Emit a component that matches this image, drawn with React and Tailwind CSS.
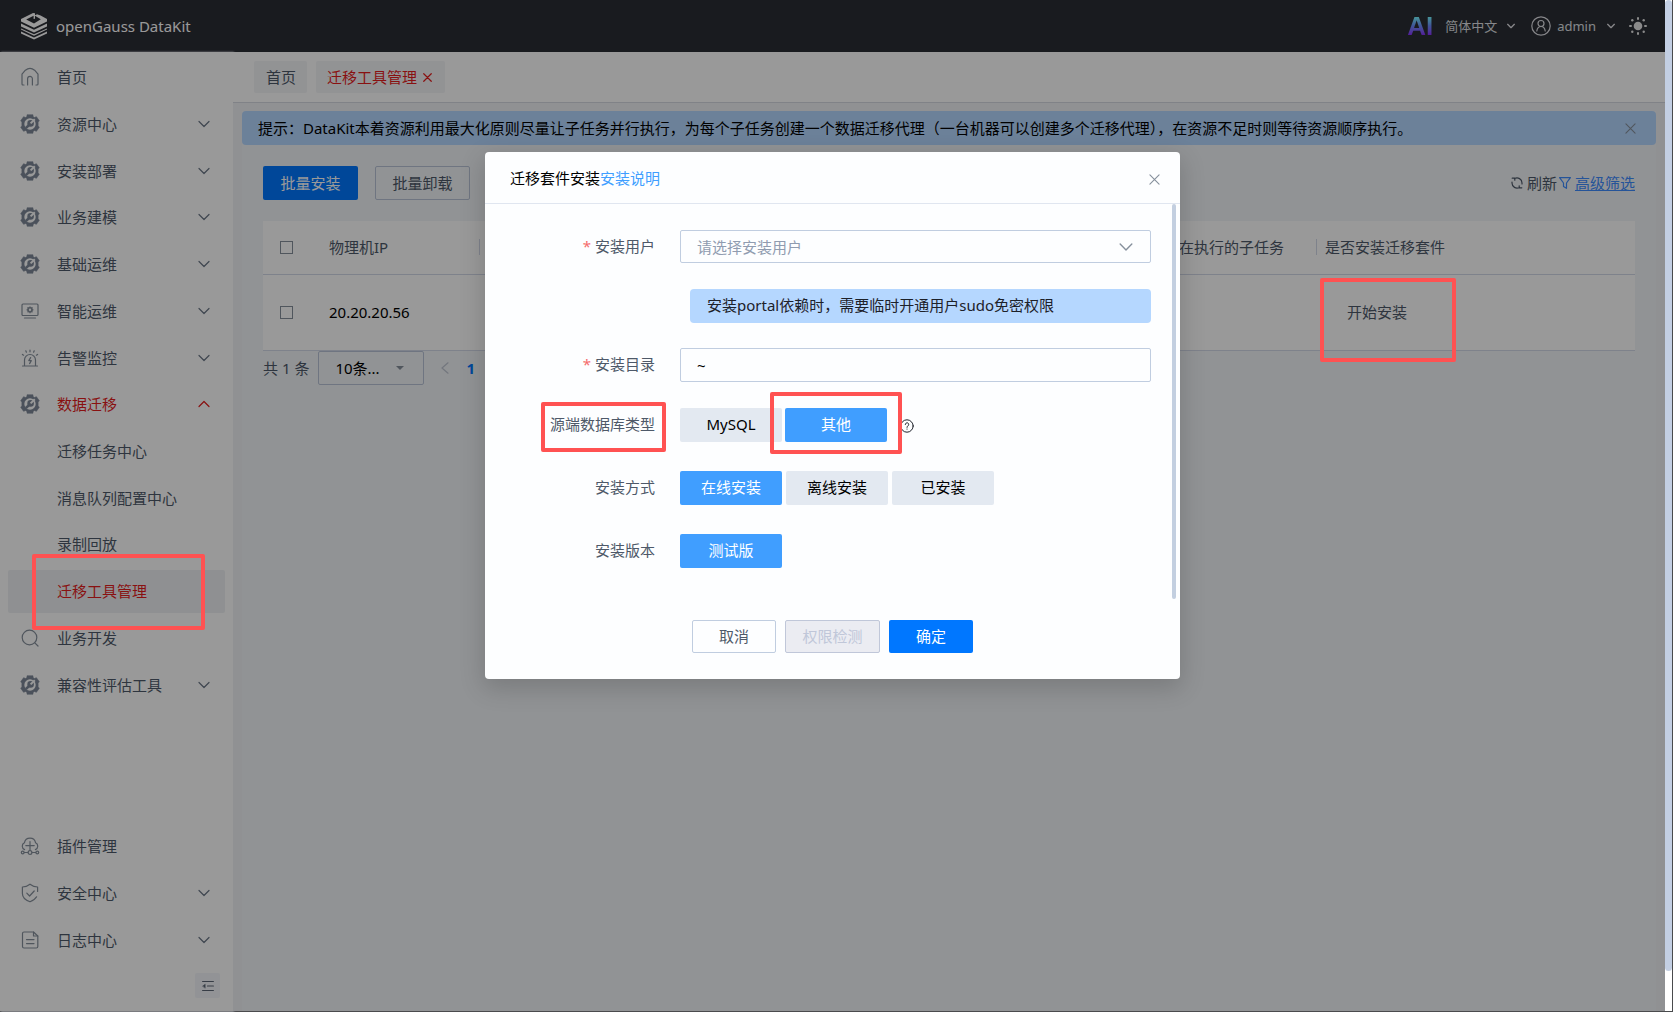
import React from "react";

const base = { fill: "none", stroke: "currentColor", strokeWidth: 1.2, strokeLinecap: "round", strokeLinejoin: "round" };

function Logo() {
  return (
    <svg className="h-7 w-7 text-white" viewBox="0 0 28 28" fill="currentColor" aria-hidden="true">
      <path d="M13 1 L1 7 V9.6 L14 15.8 L27 9.6 V7 L20.6 3.4 L17 2.2 L14.5 3.6 L20.8 7.2 L14 11.4 L6.2 7.6 L13.6 3.8 V7 L15 6.8 V1.2 Z" />
      <path d="M1 11.6 L14 17.8 L27 11.6 V14.4 L14 20.4 L1 14.4 Z" />
      <path d="M1 16.4 L14 22.2 L27 16.4 V17.6 L14 23.8 L1 17.6 Z" />
      <path d="M1 19.4 L14 25.4 L27 19.4 V21.4 L14 27.4 L1 21.4 Z" />
    </svg>
  );
}

function Gear() {
  return (
    <svg className="h-5 w-5" viewBox="0 0 20 20" aria-hidden="true">
      <path
        fill="currentColor"
        stroke="currentColor"
        strokeWidth=".6"
        strokeLinejoin="round"
        d="M7 .8h6v1.800l1.500.9 1.900-.8 2.900 4.100-1.200 1.300v3.800l1.200 1.300-2.900 4.100-1.900-.8-1.500.9v1.800H7v-1.800l-1.500-.9-1.900.8L.7 13.200l1.200-1.300V8.100L.7 6.800l2.900-4.100 1.900.8L7 2.600z"
      />
      <circle cx="10" cy="10" r="5.700" fill="#fff" />
      <path d="M5.800 14.200 9.200 10.800" stroke="currentColor" strokeWidth="2.600" />
      <circle cx="10.600" cy="9.400" r="3.300" fill="currentColor" />
      <path d="M10.600 9.400 14.800 5.200" stroke="#fff" strokeWidth="2" />
    </svg>
  );
}

const icons = {
  gear: <Gear />,
  home: (
    <svg className="h-5 w-5" viewBox="0 0 20 20" {...base} aria-hidden="true">
      <path d="M4 18H3a1 1 0 0 1-1-1V7.2L5.4 3.2Q10 -.4 14.6 3.2L18 7.2V17a1 1 0 0 1-1 1h-1" />
      <path d="M7.600 18v-6.200a2.400 2.400 0 0 1 4.800 0V18" />
    </svg>
  ),
  monitor: (
    <svg className="h-5 w-5" viewBox="0 0 20 20" {...base} aria-hidden="true">
      <rect x="2" y="3" width="16" height="11.500" rx="1" />
      <path d="M4.500 17h11" />
      <circle cx="10" cy="8.800" r="2" strokeWidth="1.600" />
      <path d="M10 5.800v.8M10 11v.8M7 8.800h.8M12.200 8.800h.8M7.900 6.700l.5.5M11.600 10.400l.5.5M12.100 6.700l-.5.5M8.400 10.400l-.5.5" />
    </svg>
  ),
  alarm: (
    <svg className="h-5 w-5" viewBox="0 0 20 20" {...base} aria-hidden="true">
      <path d="M2.500 18h15M4.500 18v-6a5.500 5.500 0 0 1 11 0v6" />
      <path d="M10.600 9.600 8.800 12.600h2.500L9.600 15.600" />
      <path d="M10 2v1.800M5.800 2.800l.6 1.400M14.200 2.800l-.6 1.400M2.400 6.400l1.200.8M17.600 6.400l-1.200.8" />
    </svg>
  ),
  search: (
    <svg className="h-5 w-5" viewBox="0 0 20 20" {...base} aria-hidden="true">
      <circle cx="9.500" cy="9.500" r="7.300" />
      <path d="M14.800 14.800 18 18" />
    </svg>
  ),
  cloud: (
    <svg className="h-5 w-5" viewBox="0 0 20 20" {...base} aria-hidden="true">
      <path d="M4.600 13.600A3.700 3.700 0 0 1 4.400 6.800 5.700 5.700 0 0 1 15.600 6.800 3.700 3.700 0 0 1 15.400 13.600" />
      <path d="M10 5.500v8.500M5.800 9.600h8.400M4.200 16.500h3.800M12 16.500h3.800" />
      <circle cx="10" cy="16.500" r="1.900" />
      <circle cx="2.700" cy="16.500" r="1.400" />
      <circle cx="17.300" cy="16.500" r="1.400" />
    </svg>
  ),
  shield: (
    <svg className="h-5 w-5" viewBox="0 0 20 20" {...base} aria-hidden="true">
      <path d="M17.600 8.500V4Q13.500 3.900 10 1.200 6.500 3.900 2.400 4v6.500q0 5.500 7.600 8.300 4.800-1.800 6.600-5" />
      <path d="m6.800 10.200 2.800 2.800L14.200 8" />
    </svg>
  ),
  doc: (
    <svg className="h-5 w-5" viewBox="0 0 20 20" {...base} aria-hidden="true">
      <path d="M4 2h9.500L17.800 6v10.500a1.500 1.500 0 0 1-1.500 1.500H4a1.500 1.500 0 0 1-1.500-1.500v-13A1.500 1.500 0 0 1 4 2Z" />
      <path d="M13.500 2v4h4.300M6.500 9.600h7.500M6.500 13.600h7.500" />
    </svg>
  ),
};

function Chevron({ up = false, className = "h-3 w-3" }) {
  return (
    <svg className={className} viewBox="0 0 12 12" {...base} aria-hidden="true">
      <path d={up ? "M1 8.500 6 3.500 11 8.500" : "M1 3.500 6 8.500 11 3.500"} />
    </svg>
  );
}

function Cross({ className }) {
  return (
    <svg className={className} viewBox="0 0 12 12" {...base} aria-hidden="true">
      <path d="M1 1 11 11M11 1 1 11" />
    </svg>
  );
}

function Mark({ className }) {
  return <span className={`pointer-events-none absolute z-20 rounded-xs border-4 border-[#ff5252] ${className}`} />;
}

function Item({ icon, label, arrow, active }) {
  return (
    <li className="flex">
      <button className={`flex w-full items-center pr-[23px] pl-5 text-left ${active ? "text-[#e41d1d]" : "text-[#4e5969]"}`}>
        <span className={icon === "gear" ? "text-[#7d8898]" : "text-[#86909c]"}>{icons[icon]}</span>
        <span className="ml-4 flex-1 pl-px">{label}</span>
        {arrow && <Chevron up={arrow === "up"} className={`h-3 w-3 ${active ? "" : "text-[#6b7686]"}`} />}
      </button>
    </li>
  );
}

function Sidebar() {
  return (
    <aside className="flex w-[233px] shrink-0 flex-col bg-white pt-0.5 shadow-[1px_0_2px_#dfe3ea]">
      <ul className="grid h-[654px] grid-rows-[repeat(14,minmax(0,1fr))]">
        <Item icon="home" label="首页" />
        <Item icon="gear" label="资源中心" arrow="down" />
        <Item icon="gear" label="安装部署" arrow="down" />
        <Item icon="gear" label="业务建模" arrow="down" />
        <Item icon="gear" label="基础运维" arrow="down" />
        <Item icon="monitor" label="智能运维" arrow="down" />
        <Item icon="alarm" label="告警监控" arrow="down" />
        <Item icon="gear" label="数据迁移" arrow="up" active />
        <li className="row-span-4">
          <ul className="grid h-full grid-rows-4">
            {["迁移任务中心", "消息队列配置中心", "录制回放"].map((t) => (
              <li key={t} className="flex items-center pl-[57px]">
                <a href="#" className="text-[#4e5969]">{t}</a>
              </li>
            ))}
            <li className="relative mx-2 my-0.5 flex items-center rounded-xs bg-[#eff1f4] pl-[49px]">
              <a href="#" className="text-[#e41d1d]">迁移工具管理</a>
              <Mark className="-top-4 left-6 h-[76px] w-[173px]" />
            </li>
          </ul>
        </li>
        <Item icon="search" label="业务开发" />
        <Item icon="gear" label="兼容性评估工具" arrow="down" />
      </ul>
      <ul className="mt-auto grid h-[141px] grid-rows-3">
        <Item icon="cloud" label="插件管理" />
        <Item icon="shield" label="安全中心" arrow="down" />
        <Item icon="doc" label="日志中心" arrow="down" />
      </ul>
      <button aria-label="收起菜单" className="mt-2.5 mr-[13px] mb-[13px] flex h-[25px] w-[25px] items-center justify-center self-end rounded-xs bg-[#f4f6fa] text-[#5c6675]">
        <svg className="h-3 w-3" viewBox="0 0 12 12" {...base} aria-hidden="true">
          <path d="M.6 1.500h10.800M5.500 6h5.900M.6 10.500h10.800" />
          <path d="M.8 6 3.200 4.200v3.600z" fill="currentColor" strokeWidth=".5" />
        </svg>
      </button>
    </aside>
  );
}

function Header() {
  return (
    <header className="flex h-[52px] items-center bg-[#2b2d35] pr-[18px] pl-5 text-white">
      <Logo />
      <span className="ml-2 flex-1">openGauss DataKit</span>
      <span className="mr-3 bg-linear-to-b from-[#7ff] from-20% via-[#6b8cff] to-[#8a1cff] to-80% bg-clip-text font-['Liberation_Sans',sans-serif] text-[26px] leading-8 font-bold text-transparent">AI</span>
      <button className="flex items-center gap-2.5 text-[13px] text-[#dfe0e4]">
        简体中文
        <Chevron className="h-2 w-2 stroke-2" />
      </button>
      <button className="ml-4 flex items-center text-[13px] text-[#dfe0e4]">
        <svg className="mr-1.5 h-5 w-5" viewBox="0 0 20 20" {...base} aria-hidden="true">
          <circle cx="10" cy="10" r="9.200" />
          <circle cx="10" cy="7.500" r="3" />
          <path d="M5.800 15c.4-2.600 2-4.500 4.200-4.500s3.800 1.900 4.200 4.500" />
        </svg>
        admin
        <Chevron className="ml-[11px] h-2 w-2 stroke-2" />
      </button>
      <button aria-label="切换主题" className="ml-3.5 text-[#e6e6e6]">
        <svg className="h-[18px] w-[18px]" viewBox="0 0 18 18" fill="currentColor" aria-hidden="true">
          <circle cx="9" cy="9" r="4.300" />
          <rect x="8" y="0" width="2" height="3" rx="1" />
          <rect x="8" y="15" width="2" height="3" rx="1" />
          <rect x="0" y="8" width="3" height="2" rx="1" />
          <rect x="15" y="8" width="3" height="2" rx="1" />
          <circle cx="3.300" cy="3.300" r="1.200" />
          <circle cx="14.700" cy="3.300" r="1.200" />
          <circle cx="3.300" cy="14.700" r="1.200" />
          <circle cx="14.700" cy="14.700" r="1.200" />
        </svg>
      </button>
    </header>
  );
}

const check = "block h-[13px] w-[13px] appearance-none border border-[#86909c] bg-white";

function Main() {
  return (
    <main className="flex min-w-0 flex-1 flex-col">
      <nav className="flex h-[51px] items-center gap-[9px] border-b border-[#d5d9e2] bg-white pl-[21px]">
        <button className="h-8 rounded-xs bg-[#f4f5f7] pr-[11px] pl-3 text-[#4e5969]">首页</button>
        <button className="flex h-8 items-center gap-1.5 rounded-xs bg-[#f4f5f7] pr-[13px] pl-[11px] text-[#e41d1d]">
          迁移工具管理
          <Cross className="h-[9px] w-[9px] stroke-[1.6]" />
        </button>
      </nav>
      <div className="flex-1 bg-[#f0f2f5] pt-[8px] pr-[9px] pl-[9px]">
        <div className="min-h-full bg-[#f2f5f8]">
          <div className="flex h-[34px] items-center rounded bg-[#b5d7ff] pr-5 pl-4 text-black">
            <span className="flex-1 whitespace-nowrap">
              提示：DataKit本着资源利用最大化原则尽量让子任务并行执行，为每个子任务创建一个数据迁移代理（一台机器可以创建多个迁移代理），在资源不足时则等待资源顺序执行。
            </span>
            <button aria-label="关闭提示" className="text-[#86909c]"><Cross className="h-[11px] w-[11px]" /></button>
          </div>
          <div className="pt-[21px] pr-[21px] pl-[21px]">
            <div className="flex items-center">
              <button className="h-[34px] w-[95px] rounded-xs bg-[#0077ff] text-white">批量安装</button>
              <button className="ml-[17px] h-[34px] w-[95px] rounded-xs border border-[#b9c4d8] text-[#4e5969]">批量卸载</button>
              <button className="ml-auto flex items-center gap-1 text-[#4e5969]">
                <svg className="h-3 w-3" viewBox="0 0 12 12" {...base} aria-hidden="true">
                  <path d="M3.500 1.600A5 5 0 0 1 11 6v1M8.500 10.400A5 5 0 0 1 1 6V5M1.200 1.200h2.600v2M10.800 10.800H8.200v-2" />
                </svg>
                刷新
              </button>
              <a href="#" className="ml-0.5 flex items-center gap-1 text-[#3f8cff]">
                <svg className="h-3 w-3" viewBox="0 0 12 12" {...base} aria-hidden="true">
                  <path d="M.6.600h10.800L7.500 6v5.300L4.500 9.500V6z" />
                </svg>
                <span className="underline decoration-1 underline-offset-1">高级筛选</span>
              </a>
            </div>
            <table className="mt-[21px] w-full table-fixed bg-white text-left">
              <colgroup>
                <col className="w-[58px]" />
                <col className="w-[159px]" />
                <col />
                <col className="w-[161px]" />
                <col className="w-[318px]" />
              </colgroup>
              <thead>
                <tr className="h-[53px] border-b border-[#d3d9e8] text-[#4e5969]">
                  <th className="pl-[17px]"><input type="checkbox" aria-label="全选" className={check} /></th>
                  <th className="pl-2 font-normal">
                    <span className="flex items-center justify-between">物理机IP<i className="h-4 w-px bg-[#d3d9e8]" /></span>
                  </th>
                  <th />
                  <th className="pl-2 font-normal whitespace-nowrap">
                    <span className="flex items-center justify-between">正在执行的子任务<i className="h-4 w-px bg-[#d3d9e8]" /></span>
                  </th>
                  <th className="pl-2 font-normal">是否安装迁移套件</th>
                </tr>
              </thead>
              <tbody>
                <tr className="h-[76px] border-b border-[#d3d9e8]">
                  <td className="pl-[17px]"><input type="checkbox" aria-label="选择 20.20.20.56" className={check} /></td>
                  <td className="pl-2 text-black">20.20.20.56</td>
                  <td />
                  <td />
                  <td>
                    <div className="relative flex h-[75px] items-center pl-[30px]">
                      <button className="text-[#4e5969]">开始安装</button>
                      <Mark className="top-[3px] left-[3px] h-[84px] w-[136px]" />
                    </div>
                  </td>
                </tr>
              </tbody>
            </table>
            <div className="flex items-center text-[#4e5969]">
              <span>共 1 条</span>
              <span className="relative ml-[9px] w-[106px]">
                <select aria-label="每页条数" className="h-[34px] w-full appearance-none rounded-xs border border-[#b9c4d8] pl-4 text-black">
                  <option>10条...</option>
                </select>
                <span className="pointer-events-none absolute top-[15px] right-5 border-x-4 border-t-4 border-x-transparent border-t-[#86909c]" />
              </span>
              <button aria-label="上一页" className="ml-[17px] text-[#c0c6d2]">
                <svg className="h-3 w-2" viewBox="0 0 8 12" {...base} aria-hidden="true"><path d="M7 .8 1 6l6 5.200" /></svg>
              </button>
              <button className="ml-[17px] font-bold text-[#0077ff]">1</button>
            </div>
          </div>
        </div>
      </div>
    </main>
  );
}

function Row({ label, htmlFor, required, mark, className, children }) {
  return (
    <div className={`flex items-center ${className}`}>
      <label htmlFor={htmlFor} className="relative w-[170px] shrink-0 pb-0.5 text-right text-[#4e5969]">
        {required && <span className="mr-1 text-[#f56c6c]">*</span>}
        {label}
        {mark && <Mark className="-top-2.5 -right-[11px] h-[50px] w-[125px]" />}
      </label>
      <div className="ml-[25px] flex flex-1 items-center">{children}</div>
    </div>
  );
}

function Choice({ name, label, checked }) {
  return (
    <label className="flex h-[34px] w-[102px] items-center justify-center rounded-xs bg-[#e3e9f1] pb-0.5 text-black has-checked:bg-[#409eff] has-checked:text-white">
      <input type="radio" name={name} defaultChecked={checked} className="sr-only" />
      {label}
    </label>
  );
}

function Dialog() {
  return (
    <section role="dialog" aria-label="迁移套件安装" className="mx-auto mt-[152px] flex w-[695px] flex-col rounded bg-[#fdfeff] shadow-[0_8px_24px_2px_rgba(0,0,0,0.16)]">
      <div className="flex h-[52px] items-center border-b border-[#e0e6f0] pr-5 pl-[25px]">
        <h2 className="text-black">迁移套件安装</h2>
        <a href="#" className="flex-1 text-[#409eff]">安装说明</a>
        <button aria-label="关闭" className="pt-1 text-[#86909c]"><Cross className="h-[11px] w-[11px]" /></button>
      </div>
      <div className="flex h-[395px] pr-1">
        <form className="flex-1 pt-[26px] pr-[21px]">
          <Row label="安装用户" htmlFor="user" required>
            <div className="relative flex-1">
              <select id="user" className="block h-[33px] w-full appearance-none rounded-xs border border-[#c0cde0] pl-4 text-[#909cb0]">
                <option>请选择安装用户</option>
              </select>
              <Chevron className="pointer-events-none absolute top-2.5 right-[18px] h-3.5 w-3.5 text-[#86909c]" />
            </div>
          </Row>
          <p className="mt-[26px] ml-[205px] flex h-[34px] items-center rounded bg-[#b5d7ff] pb-0.5 pl-[17px] text-[#1d2129]">
            安装portal依赖时，需要临时开通用户sudo免密权限
          </p>
          <Row label="安装目录" htmlFor="dir" required className="mt-[25px]">
            <input id="dir" defaultValue="~" className="h-[34px] min-w-0 flex-1 rounded-xs border border-[#c0cde0] pl-4 text-black" />
          </Row>
          <Row label="源端数据库类型" mark className="mt-[26px]">
            <Choice name="source" label="MySQL" />
            <div className="relative ml-[3px]">
              <Choice name="source" label="其他" checked />
              <Mark className="-top-4 -left-[15px] h-[62px] w-[132px]" />
            </div>
            <button type="button" aria-label="帮助" className="ml-[13px] pt-0.5 text-[#1d2129]">
              <svg className="h-3.5 w-3.5" viewBox="0 0 14 14" {...base} strokeWidth="1" aria-hidden="true">
                <circle cx="7" cy="7" r="6.200" />
                <path d="M5.300 5.500a1.700 1.700 0 1 1 2.600 1.400q-.9.600-.9 1.500M7 10v.2" />
              </svg>
            </button>
          </Row>
          <Row label="安装方式" className="mt-[29px]">
            <div className="flex gap-1">
              <Choice name="mode" label="在线安装" checked />
              <Choice name="mode" label="离线安装" />
              <Choice name="mode" label="已安装" />
            </div>
          </Row>
          <Row label="安装版本" className="mt-[29px]">
            <Choice name="version" label="测试版" checked />
          </Row>
        </form>
        <span className="w-1 rounded-full bg-[#c3cfe0]" />
      </div>
      <div className="flex justify-center gap-[9px] pt-[21px] pb-[26px]">
        <button className="h-[33px] w-[84px] rounded-xs border border-[#c0cde0] pb-0.5 text-[#4e5969]">取消</button>
        <button disabled className="h-[33px] w-[95px] rounded-xs border border-[#c0c7d9] bg-[#ebecf2] pb-0.5 text-[#c0c7d9]">权限检测</button>
        <button className="h-[33px] w-[84px] rounded-xs bg-[#0077ff] pb-0.5 text-white">确定</button>
      </div>
    </section>
  );
}

export default function App() {
  return (
    <div className="flex min-h-screen border-r border-b border-[#4a4b4d] bg-white font-['Noto_Sans','Noto_Sans_CJK_SC',sans-serif] text-[15px] leading-6">
      <div className="relative flex min-w-0 flex-1 flex-col">
        <Header />
        <div className="flex flex-1">
          <Sidebar />
          <Main />
        </div>
        <div className="absolute inset-0 z-10 bg-black/40">
          <Dialog />
        </div>
      </div>
      <div className="w-[7px] bg-white pb-10">
        <div className="h-full rounded-full bg-[#c3cfe3]" />
      </div>
    </div>
  );
}
